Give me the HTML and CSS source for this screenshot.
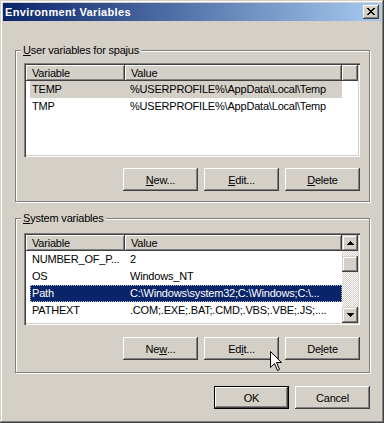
FILE: index.html
```html
<!DOCTYPE html>
<html>
<head>
<meta charset="utf-8">
<title>Environment Variables</title>
<link rel="stylesheet" href="styles.css">
</head>
<body>
<div class="window">
  <div class="titlebar">
    <span class="title">Environment Variables</span>
    <div class="close">
      <svg width="8" height="7" viewBox="0 0 8 7" shape-rendering="crispEdges"><path d="M0 0h2v1h-2zM6 0h2v1h-2zM1 1h2v1h-2zM5 1h2v1h-2zM2 2h4v1h-4zM3 3h2v1h-2zM2 4h4v1h-4zM1 5h2v1h-2zM5 5h2v1h-2zM0 6h2v1h-2zM6 6h2v1h-2z" fill="#000"/></svg>
    </div>
  </div>
  <div class="body">
    <div class="group g1">
      <span class="legend"><u>U</u>ser variables for spajus</span>
      <div class="list l1">
        <div class="list-main">
          <div class="header">
            <div class="hcell hc1">Variable</div>
            <div class="hcell hc2">Value</div>
            <div class="hcell hfill"></div>
          </div>
          <div class="row sel"><span class="c1">TEMP</span><span class="c2">%USERPROFILE%\AppData\Local\Temp</span></div>
          <div class="row"><span class="c1">TMP</span><span class="c2">%USERPROFILE%\AppData\Local\Temp</span></div>
        </div>
      </div>
      <div class="btns">
        <div class="btn"><u>N</u>ew...</div>
        <div class="btn"><u>E</u>dit...</div>
        <div class="btn"><u>D</u>elete</div>
      </div>
    </div>
    <div class="group g2">
      <span class="legend"><u>S</u>ystem variables</span>
      <div class="list l2">
        <div class="list-main">
          <div class="header">
            <div class="hcell hc1">Variable</div>
            <div class="hcell hc2">Value</div>
          </div>
          <div class="row"><span class="c1">NUMBER_OF_P...</span><span class="c2">2</span></div>
          <div class="row"><span class="c1">OS</span><span class="c2">Windows_NT</span></div>
          <div class="row active"><span class="c1">Path</span><span class="c2">C:\Windows\system32;C:\Windows;C:\...</span></div>
          <div class="row"><span class="c1">PATHEXT</span><span class="c2">.COM;.EXE;.BAT;.CMD;.VBS;.VBE;.JS;....</span></div>
        </div>
        <div class="scrollbar">
          <div class="sb-btn"><svg width="7" height="4" viewBox="0 0 7 4" shape-rendering="crispEdges"><path d="M3 0h1v1h-1zM2 1h3v1h-3zM1 2h5v1h-5zM0 3h7v1h-7z" fill="#000"/></svg></div>
          <div class="thumb"></div>
          <div class="sb-space"></div>
          <div class="sb-btn"><svg width="7" height="4" viewBox="0 0 7 4" shape-rendering="crispEdges"><path d="M0 0h7v1h-7zM1 1h5v1h-5zM2 2h3v1h-3zM3 3h1v1h-1z" fill="#000"/></svg></div>
        </div>
      </div>
      <div class="btns">
        <div class="btn">Ne<u>w</u>...</div>
        <div class="btn">Ed<u>i</u>t...</div>
        <div class="btn">De<u>l</u>ete</div>
      </div>
    </div>
    <div class="footer">
      <div class="btn default">OK</div>
      <div class="btn">Cancel</div>
    </div>
  </div>
  <svg class="cursor" width="13" height="21" viewBox="0 0 13 21"><path d="M0.5 0.5V16.5L4.5 12.5L7.5 19.5L9.5 18.5L6.5 11.5H11.5Z" fill="#fff" stroke="#000" stroke-width="1" stroke-linejoin="miter"/></svg>
</div>
</body>
</html>
```
FILE: styles.css
```css
html, body {
  margin: 0;
  padding: 0;
  background: #d4d0c8;
}
body {
  width: 384px;
  height: 423px;
  overflow: hidden;
}
.window {
  position: relative;
  width: 384px;
  height: 423px;
  box-sizing: border-box;
  padding: 3px;
  background: #d4d0c8;
  box-shadow: inset -1px -1px #404040, inset 1px 1px #d4d0c8, inset -2px -2px #808080, inset 2px 2px #fff;
  font: 11px "Liberation Sans", Arial, sans-serif;
  letter-spacing: -0.2px;
  color: #000;
}
.titlebar {
  height: 18px;
  display: flex;
  align-items: center;
  justify-content: space-between;
  padding: 0 2px;
  background: linear-gradient(to right, #0a246a, #a6caf0);
  color: #fff;
  font-weight: bold;
}
.title {
  line-height: 18px;
  letter-spacing: 0.35px;
}
.close {
  width: 16px;
  height: 14px;
  box-sizing: border-box;
  padding: 3px 0 0 4px;
  background: #d4d0c8;
  box-shadow: inset -1px -1px #404040, inset 1px 1px #fff, inset -2px -2px #808080, inset 2px 2px #d4d0c8;
}
.close svg {
  display: block;
}
.body {
  padding: 0 11px 0 12px;
}
.group {
  position: relative;
  border: 1px solid #808080;
  box-shadow: inset 1px 1px #fff, 1px 1px #fff;
}
.g1 {
  margin-top: 29px;
  padding: 12px 9px 10px 8px;
}
.g2 {
  margin-top: 16px;
  padding: 14px 9px 12px 8px;
}
.legend {
  position: absolute;
  top: -8px;
  left: 5px;
  padding: 0 2px;
  line-height: 14px;
  background: #d4d0c8;
}
.list {
  box-sizing: border-box;
  padding: 2px;
  background: #fff;
  box-shadow: inset 1px 1px #808080, inset 2px 2px #404040, inset -1px -1px #fff, inset -2px -2px #d4d0c8;
}
.l1 {
  height: 94px;
}
.l2 {
  height: 92px;
  display: flex;
}
.list-main {
  flex: 1;
  overflow: hidden;
}
.header {
  display: flex;
  height: 16px;
}
.hcell {
  box-sizing: border-box;
  padding-left: 6px;
  line-height: 16px;
  background: #d4d0c8;
  box-shadow: inset -1px -1px #404040, inset 1px 1px #fff, inset -2px -2px #808080;
}
.hc1 {
  width: 99px;
}
.hc2 {
  width: 217px;
}
.hfill {
  flex: 1;
}
.row {
  display: flex;
  height: 17px;
  line-height: 17px;
  margin-left: 4px;
  width: 312px;
  white-space: nowrap;
  box-sizing: border-box;
}
.row .c1 {
  width: 95px;
  padding-left: 2px;
  box-sizing: border-box;
}
.row .c2 {
  padding-left: 5px;
}
.row.sel {
  background: #d4d0c8;
}
.row.active {
  background: #0a246a;
  color: #fff;
  outline: 1px dotted #b8b8c8;
  outline-offset: -1px;
}
.scrollbar {
  width: 16px;
  display: flex;
  flex-direction: column;
  background: repeating-conic-gradient(#fff 0 25%, #d4d0c8 0 50%) 0 0 / 2px 2px;
}
.sb-btn {
  height: 16px;
  display: flex;
  align-items: center;
  justify-content: center;
  background: #d4d0c8;
  box-shadow: inset -1px -1px #404040, inset 1px 1px #d4d0c8, inset -2px -2px #808080, inset 2px 2px #fff;
}
.sb-btn svg {
  display: block;
}
.thumb {
  height: 16px;
  margin-top: 5px;
  background: #d4d0c8;
  box-shadow: inset -1px -1px #404040, inset 1px 1px #d4d0c8, inset -2px -2px #808080, inset 2px 2px #fff;
}
.sb-space {
  flex: 1;
}
.btns {
  display: flex;
  justify-content: flex-end;
  gap: 6px;
  margin-top: 11px;
}
.g2 .btns {
  margin-top: 12px;
}
.btn {
  width: 75px;
  height: 23px;
  box-sizing: border-box;
  display: flex;
  align-items: center;
  justify-content: center;
  background: #d4d0c8;
  box-shadow: inset -1px -1px #404040, inset 1px 1px #fff, inset -2px -2px #808080, inset 2px 2px #d4d0c8;
}
.btn.default {
  border: 1px solid #000;
}
.footer {
  display: flex;
  justify-content: flex-end;
  gap: 6px;
  margin-top: 13px;
}
.cursor {
  position: absolute;
  left: 270px;
  top: 351px;
}
```
